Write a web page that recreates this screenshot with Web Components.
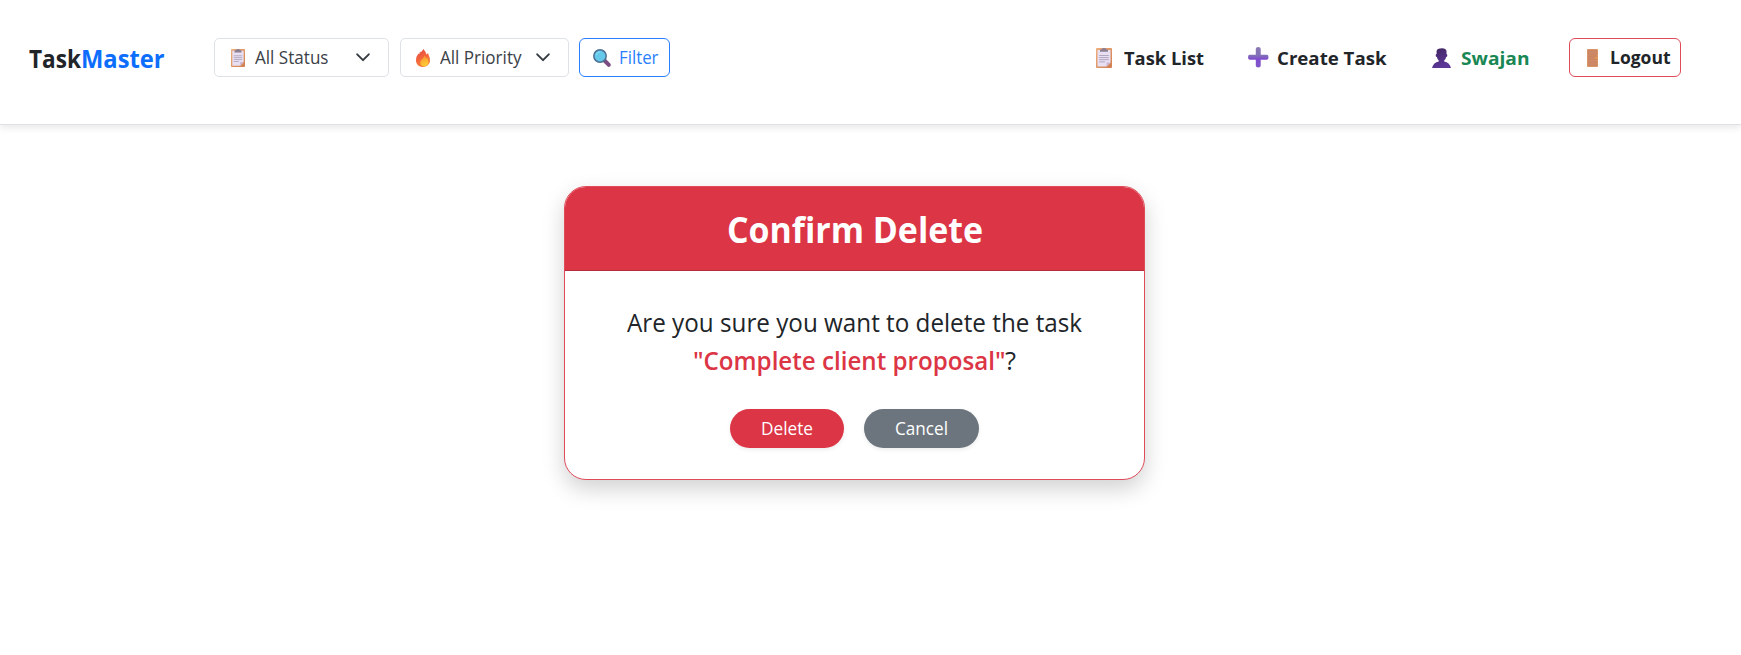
<!DOCTYPE html>
<html lang="en">
<head>
<meta charset="utf-8">
<title>TaskMaster</title>
<style>
  html, body { margin: 0; background: #fff; }
  body { font-family: "Open Sans", "Noto Sans", sans-serif; color: #212529; height: 655px; overflow: hidden; }
</style>
</head>
<body>
<task-app></task-app>
<script>
  const define = (name, html, setup) => {
    const template = document.createElement('template');
    template.innerHTML = html;
    customElements.define(name, class extends HTMLElement {
      constructor() {
        super();
        this.attachShadow({ mode: 'open' }).append(template.content.cloneNode(true));
      }
      connectedCallback() { if (setup) setup(this); }
    });
  };

  const board = `<svg viewBox="0 0 16 20" preserveAspectRatio="none"><defs><linearGradient id="b" x2="1" y2="1"><stop stop-color="#efb07c"/><stop offset="1" stop-color="#d07d50"/></linearGradient></defs><rect width="16" height="20" rx=".9" fill="url(#b)"/><path d="M1.5 2H14.5V14.5L10.5 18.5H1.5Z" fill="#e8dff3"/><path d="M10.5 18.5V14.5H14.5Z" fill="#c9b5d3"/><path d="M4 3.8V2.2Q4 1.2 5.8 1.2Q6.2 0 8 0T10.2 1.2Q12 1.2 12 2.2V3.8Z" fill="#8c7f91"/><path d="M3.2 7.5H12.8M3.2 9.6H12.8M3.2 11.7H12.8M3.2 13.9H9" stroke="#aaa0b8" stroke-width=".9"/></svg>`;
  const icons = {
    board,
    fire: `<svg viewBox="0 0 14 18"><defs><linearGradient id="f" x1=".2" x2=".6" y2="1"><stop stop-color="#e44d46"/><stop offset=".5" stop-color="#f3633b"/><stop offset="1" stop-color="#f68b3b"/></linearGradient><linearGradient id="y" x2=".3" y2="1"><stop stop-color="#f58b35"/><stop offset="1" stop-color="#ffca32"/></linearGradient></defs><path d="M7.3 0Q6.6 1.7 4.6 3.6L4.4 2.6Q3.5 3.5 3.2 5.2L2.5 4.6Q0 7.5 0 11.2C0 15.2 3 18 7 18S14 15.2 14 11.3C14 7.9 12.4 6.4 12.1 4.2Q11 4.4 10.4 5.4Q9.6 2.4 7.3 0Z" fill="url(#f)"/><path d="M8.6 6.2Q8.4 8.5 6.2 10Q4.3 11.4 4.3 13.5C4.3 15.8 6 17.2 8.3 17.2S12.4 15.5 12.4 13C12.4 10.7 11.4 10.2 11.4 8.4Q10.5 8.8 10.2 9.8Q9.7 7.7 8.6 6.2Z" fill="url(#y)"/></svg>`,
    lens: `<svg viewBox="0 0 18 18"><path d="M12 12L15.8 15.8" stroke="#7c4c83" stroke-width="4" stroke-linecap="round"/><path d="M10.5 10.5L12.6 12.6" stroke="#665a80" stroke-width="1.8"/><circle cx="7" cy="7" r="6.2" fill="#63c8ea" stroke="#4c6e91" stroke-width="1.5"/><path d="M3.2 6.1Q4 3.2 7 3" fill="none" stroke="#83daf3" stroke-width="1.2"/></svg>`,
    plus: `<svg viewBox="0 0 20 20"><defs><linearGradient id="p" x2="0" y2="1"><stop stop-color="#8d7ab5"/><stop offset=".42" stop-color="#8070b5"/><stop offset=".58" stop-color="#814dd0"/><stop offset="1" stop-color="#8058c8"/></linearGradient></defs><path d="M7.6 1.6Q7.6 0 10 0T12.4 1.6V7.6H18.4Q20 7.6 20 10T18.4 12.4H12.4V18.4Q12.4 20 10 20T7.6 18.4V12.4H1.6Q0 12.4 0 10T1.6 7.6H7.6Z" fill="url(#p)"/></svg>`,
    person: `<svg viewBox="0 0 19 20"><defs><linearGradient id="u" x2=".4" y2="1"><stop stop-color="#402560"/><stop offset="1" stop-color="#5c3798"/></linearGradient></defs><path d="M4.6 3Q5 .4 8 .4Q13.6-.5 14.5 2.8V6Q15.5 6.1 15.3 7.8Q15.1 9 14.1 9.1Q13.8 11.4 12.2 12.4V13.4Q17.5 14.2 19 20H0Q1.5 14.2 6.8 13.4V12.4Q5.2 11.4 4.9 9.1Q3.9 9 3.7 7.8Q3.5 6.1 4.6 6Z" fill="url(#u)"/></svg>`,
    door: `<svg viewBox="0 0 11 18" preserveAspectRatio="none"><rect width="11" height="18" rx=".8" fill="#d9956a"/><path d="M1.5 1.5H9.5V6.2H1.5ZM1.5 7.3H9.5V10.7H1.5ZM1.5 12H9.5V16.5H1.5Z" fill="#cd8868" stroke="#c47c5a" stroke-width=".5"/><circle cx="9.2" cy="8.9" r=".9" fill="#f6a23c"/></svg>`,
    chevron: `<svg viewBox="0 0 14 9"><path d="M1.2 1.3L7 7.2L12.8 1.3" fill="none" stroke="#343a40" stroke-width="1.9" stroke-linecap="round" stroke-linejoin="round"/></svg>`
  };

  define('app-icon', `<style>:host{display:block;flex:none}svg{display:block;width:100%;height:100%;overflow:visible}</style>`, el => {
    const holder = document.createElement('template');
    holder.innerHTML = icons[el.getAttribute('name')];
    el.shadowRoot.append(holder.content);
    el.style.width = el.getAttribute('w') + 'px';
    el.style.height = el.getAttribute('h') + 'px';
  });

  // A single-line label condensed horizontally so that it fills its given measure.
  define('app-label', `<style>:host{display:inline-block;flex:none;white-space:nowrap;text-align:left}span{display:inline-block;font-variant-ligatures:none;transform-origin:0 50%}</style><span><slot></slot></span>`, el => {
    const measure = parseFloat(el.getAttribute('w'));
    const span = el.shadowRoot.querySelector('span');
    const natural = span.getBoundingClientRect().width;
    span.style.transform = `scaleX(${measure / natural})`;
    el.style.width = measure + 'px';
    span.style.marginRight = measure - natural + 'px';
  });

  define('app-select', `<style>
    :host{display:flex;flex:none;align-items:center;box-sizing:border-box;height:39px;padding-left:16px;border:1px solid #dee2e6;border-radius:5px;font-size:17.4px;line-height:37px;color:#3b4147}
    .arrow{margin-left:auto;margin-right:18px}
  </style><slot name="icon"></slot><slot></slot><app-icon class="arrow" name="chevron" w="14" h="9"></app-icon>`);

  define('app-button', `<style>
    :host{display:flex;flex:none;align-items:center;box-sizing:border-box;height:39px;border:1px solid currentColor;border-radius:6px;font-size:17.4px;line-height:37px}
    :host([kind=filter]){width:91px;margin-left:10px;padding-left:13px;color:#2a7fff}
    :host([kind=logout]){width:112px;padding-left:17px;border-color:#e04b5a;color:#212529;font-weight:700}
    :host([pill]){width:115px;justify-content:center;border:0;border-radius:20px;line-height:39px;color:#fff;box-shadow:0 2px 4px rgba(0,0,0,.075)}
    :host([kind=danger]){width:114px;background:#dc3545}
    :host([kind=muted]){background:#6c757d}
  </style><slot></slot>`);

  define('nav-link', `<style>:host{display:flex;align-items:center;font-size:18.6px;font-weight:700;line-height:40px}</style><slot></slot>`);

  define('task-nav', `<style>
    :host{display:flex;box-sizing:border-box;height:125px;padding:38px 60px 0 28.5px;align-items:flex-start;border-bottom:1px solid #dee2e6;box-shadow:0 2px 8px rgba(0,0,0,.11)}
    .brand{display:flex;width:185.5px;font-size:25.2px;font-weight:700;line-height:40px}
    .brand .blue{color:#0d6efd}
    .links{display:flex;margin-left:auto;align-items:center;height:39px}
  </style>
  <div class="brand"><app-label w="52">Task</app-label><app-label class="blue" w="83.5">Master</app-label></div>
  <app-select style="width:175px"><app-icon slot="icon" name="board" w="14" h="18"></app-icon><app-label w="73.5" style="margin-left:10px">All Status</app-label></app-select>
  <app-select style="width:169px;margin-left:11px;padding-left:15px"><app-icon slot="icon" name="fire" w="14" h="18"></app-icon><app-label w="81.5" style="margin-left:10px">All Priority</app-label></app-select>
  <app-button kind="filter"><app-icon name="lens" w="18" h="18"></app-icon><app-label w="39.5" style="margin-left:8px">Filter</app-label></app-button>
  <div class="links">
    <nav-link><app-icon name="board" w="16" h="20"></app-icon><app-label w="80" style="margin-left:12px">Task List</app-label></nav-link>
    <nav-link style="margin-left:44px"><app-icon name="plus" w="20.5" h="20.5"></app-icon><app-label w="109.5" style="margin-left:9px">Create Task</app-label></nav-link>
    <nav-link style="margin-left:45.5px"><app-icon name="person" w="19" h="20"></app-icon><app-label w="68.5" style="margin-left:9.5px;color:#198754">Swajan</app-label></nav-link>
    <app-button kind="logout" style="margin-left:40px"><app-icon name="door" w="11" h="18"></app-icon><app-label w="60.5" style="margin-left:12px">Logout</app-label></app-button>
  </div>`);

  define('confirm-card', `<style>
    :host{display:block;box-sizing:border-box;width:581px;height:294px;margin:61px 0 0 564px;border:1px solid #e04b5a;border-radius:22px;background:#fff;box-shadow:0 9px 22px rgba(0,0,0,.18);overflow:hidden}
    header{box-sizing:border-box;height:84px;padding-top:1px;background:#dc3545;border-bottom:1px solid #b52b39;text-align:center;color:#fff;font-size:35.4px;font-weight:700;line-height:83px}
    h1{margin:0;font:inherit}
    p{margin:32px 0 0;text-align:center;font-size:25px;line-height:38px}
    .line{display:flex;justify-content:center}
    .task{color:#dc3545;font-weight:600}
    footer{display:flex;justify-content:center;gap:20px;margin-top:30px}
  </style>
  <header><h1><app-label w="256">Confirm Delete</app-label></h1></header>
  <p><span class="line"><app-label w="455">Are you sure you want to delete the task</app-label></span>
  <span class="line"><app-label class="task" w="312.5">"Complete client proposal"</app-label><app-label w="11">?</app-label></span></p>
  <footer><app-button pill kind="danger"><app-label w="52">Delete</app-label></app-button><app-button pill kind="muted"><app-label w="53">Cancel</app-label></app-button></footer>`);

  define('task-app', `<style>:host{display:block}</style><task-nav></task-nav><confirm-card></confirm-card>`);
</script>
</body>
</html>
